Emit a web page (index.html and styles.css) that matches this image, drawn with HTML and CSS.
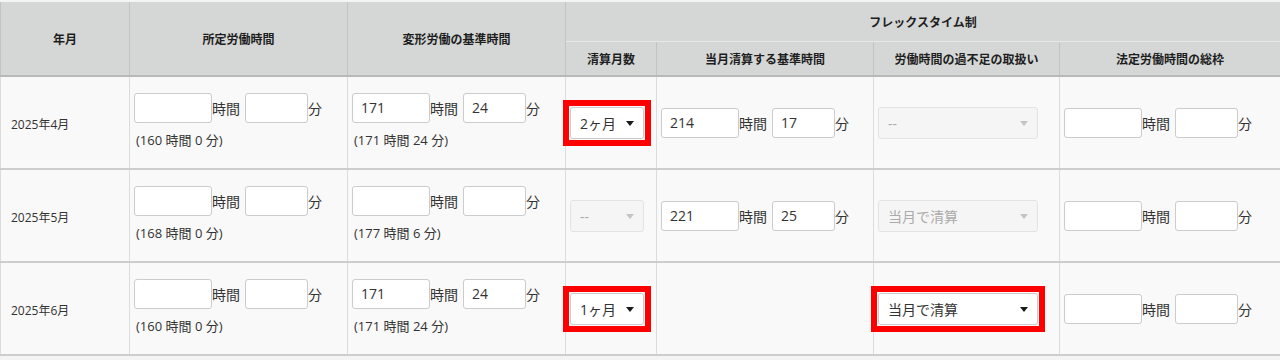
FILE: index.html
```html
<!DOCTYPE html>
<html lang="ja">
<head>
<meta charset="utf-8">
<title>労働時間設定</title>
<link rel="stylesheet" href="styles.css">
</head>
<body>
<table class="grid">
  <colgroup>
    <col class="c-ym"><col class="c-w"><col class="c-w"><col class="c-n"><col class="c-b"><col class="c-h"><col class="c-l">
  </colgroup>
  <thead>
    <tr class="h1">
      <th rowspan="2">年月</th>
      <th rowspan="2">所定労働時間</th>
      <th rowspan="2">変形労働の基準時間</th>
      <th colspan="4" class="grp">フレックスタイム制</th>
    </tr>
    <tr class="h2">
      <th>清算月数</th>
      <th>当月清算する基準時間</th>
      <th>労働時間の過不足の取扱い</th>
      <th>法定労働時間の総枠</th>
    </tr>
  </thead>
  <tbody>
    <tr>
      <td class="ym">2025年4月</td>
      <td>
        <div class="tm"><input class="in" value=""><span class="lh">時間</span><input class="in m" value=""><span>分</span></div>
        <div class="sub">(160 時間 0 分)</div>
      </td>
      <td>
        <div class="tm"><input class="in" value="171"><span class="lh">時間</span><input class="in m" value="24"><span>分</span></div>
        <div class="sub">(171 時間 24 分)</div>
      </td>
      <td><span class="sel mark"><select><option>2ヶ月</option></select></span></td>
      <td><div class="tm"><input class="in" value="214"><span class="lh">時間</span><input class="in m" value="17"><span>分</span></div></td>
      <td><span class="sel wide off"><select disabled><option>--</option></select></span></td>
      <td><div class="tm"><input class="in" value=""><span class="lh">時間</span><input class="in m" value=""><span>分</span></div></td>
    </tr>
    <tr>
      <td class="ym">2025年5月</td>
      <td>
        <div class="tm"><input class="in" value=""><span class="lh">時間</span><input class="in m" value=""><span>分</span></div>
        <div class="sub">(168 時間 0 分)</div>
      </td>
      <td>
        <div class="tm"><input class="in" value=""><span class="lh">時間</span><input class="in m" value=""><span>分</span></div>
        <div class="sub">(177 時間 6 分)</div>
      </td>
      <td><span class="sel off"><select disabled><option>--</option></select></span></td>
      <td><div class="tm"><input class="in" value="221"><span class="lh">時間</span><input class="in m" value="25"><span>分</span></div></td>
      <td><span class="sel wide off"><select disabled><option>当月で清算</option></select></span></td>
      <td><div class="tm"><input class="in" value=""><span class="lh">時間</span><input class="in m" value=""><span>分</span></div></td>
    </tr>
    <tr>
      <td class="ym">2025年6月</td>
      <td>
        <div class="tm"><input class="in" value=""><span class="lh">時間</span><input class="in m" value=""><span>分</span></div>
        <div class="sub">(160 時間 0 分)</div>
      </td>
      <td>
        <div class="tm"><input class="in" value="171"><span class="lh">時間</span><input class="in m" value="24"><span>分</span></div>
        <div class="sub">(171 時間 24 分)</div>
      </td>
      <td><span class="sel mark"><select><option>1ヶ月</option></select></span></td>
      <td></td>
      <td><span class="sel wide mark"><select><option>当月で清算</option></select></span></td>
      <td><div class="tm"><input class="in" value=""><span class="lh">時間</span><input class="in m" value=""><span>分</span></div></td>
    </tr>
  </tbody>
</table>
</body>
</html>
```

FILE: styles.css
```css
body {
  margin: 0;
  padding-top: 2px;
  background: #f4f4f4;
  font-family: "Open Sans", "Noto Sans CJK JP", sans-serif;
  color: #333;
}

.grid {
  border-collapse: collapse;
  table-layout: fixed;
  width: 1280px;
  border-left: 1px solid #c4c4c4;
}

.c-ym { width: 129px; }
.c-w { width: 218px; }
.c-n { width: 91px; }
.c-b { width: 217px; }
.c-h { width: 186px; }
.c-l { width: 221px; }

.grid th {
  background: #d5d7d6;
  color: #1e1e1e;
  font-size: 12px;
  font-weight: bold;
  text-align: center;
  vertical-align: middle;
  padding: 0;
  border: 1px solid #c2c4c3;
  border-bottom: 2px solid #b9b9b9;
  border-top: none;
}

.grid th.grp {
  border-bottom: 1px solid #e6e7e6;
}

.h1 th { height: 39px; }
.h2 th { height: 33px; }

.grid td {
  background: #f9f9f9;
  height: 88px;
  padding: 0 4px;
  vertical-align: middle;
  border-left: 1px solid #dcdcdc;
  border-right: 1px solid #dcdcdc;
  border-bottom: 2px solid #cdcdcd;
  font-size: 14px;
}

.grid td.ym {
  font-size: 12px;
  padding-left: 10px;
  padding-top: 3px;
}

.tm {
  display: flex;
  align-items: center;
}

.in {
  box-sizing: border-box;
  width: 78px;
  height: 30px;
  margin: 0;
  padding: 0 8px;
  border: 1px solid #cccccc;
  border-radius: 3px;
  background: #fff;
  color: #333;
  font-family: "Open Sans", "Noto Sans CJK JP", sans-serif;
  font-size: 14px;
}

.in.m { width: 63px; }

.lh { margin-right: 5px; }

.sub {
  font-size: 13px;
  line-height: 18px;
  margin-top: 8px;
  padding-left: 2px;
  padding-bottom: 4px;
}

.sel {
  position: relative;
  display: inline-block;
  vertical-align: middle;
  margin-top: 1px;
}

.sel select {
  -webkit-appearance: none;
  appearance: none;
  box-sizing: border-box;
  display: block;
  width: 74px;
  height: 32px;
  margin: 0;
  padding: 0 0 0 9px;
  border: 1px solid #cccccc;
  border-radius: 3px;
  background: #fff;
  color: #333;
  font-family: "Open Sans", "Noto Sans CJK JP", sans-serif;
  font-size: 14px;
  opacity: 1;
}

.sel::after {
  content: "";
  position: absolute;
  right: 10px;
  top: 14px;
  border-left: 4px solid transparent;
  border-right: 4px solid transparent;
  border-top: 5px solid #1a1a1a;
  pointer-events: none;
}

.sel.wide select { width: 160px; }

.sel.off select {
  background: #f5f5f5;
  border-color: #e3e3e3;
  color: #aaaaaa;
}

.sel.off::after { border-top-color: #c4c4c4; }

.mark {
  outline: 6px solid #ff0000;
  outline-offset: 1px;
}
```
